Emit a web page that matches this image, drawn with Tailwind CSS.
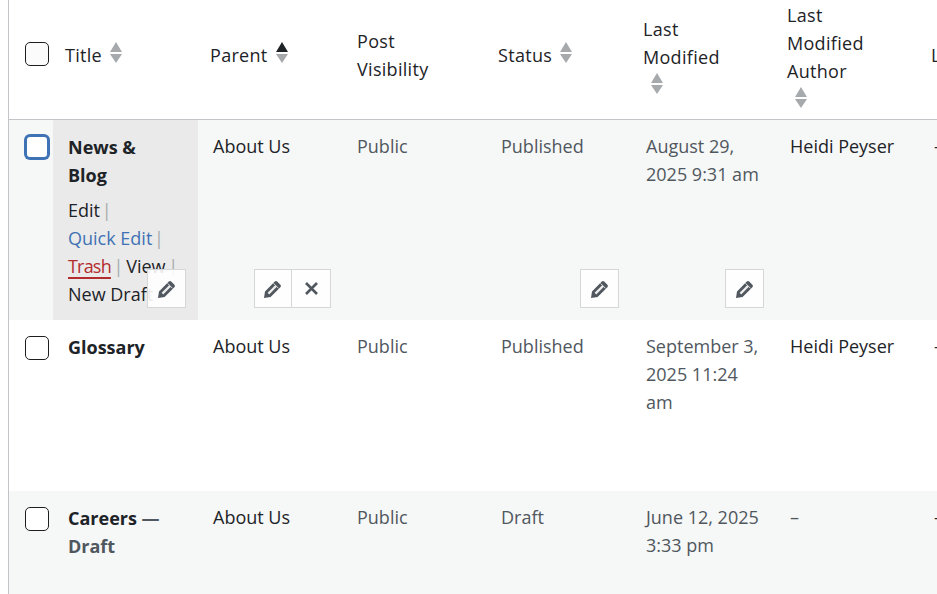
<!DOCTYPE html>
<html lang="en">
  <head>
    <meta charset="UTF-8">
    <script src="https://cdn.jsdelivr.net/npm/@tailwindcss/browser@4"></script>
    <title>Pages</title>
  </head>
  <body class="h-screen overflow-hidden bg-white font-['Open_Sans',sans-serif] text-[18px] leading-[28px] text-[#1d2327]">
    <svg class="hidden">
      <symbol id="pencil" viewBox="0 0 18 18">
        <path fill="#50575e" d="M0 18 L1 11.4 L10.8 1.6 Q12 .4 13.2 1.6 L16.4 4.8 Q17.6 6 16.4 7.2 L6.6 17 Z"/>
        <path stroke="#eeeeee" stroke-width="2.2" fill="none" d="M4.4 13.6 L12 6"/>
        <path stroke="#eeeeee" stroke-width="0.9" fill="none" d="M9.6 3.4 L14.6 8.4"/>
      </symbol>
      <symbol id="sort" viewBox="0 0 12 21">
        <path fill="#a7aaad" d="M6 0 L12 10 H0 Z M0 12 H12 L6 21 Z"/>
      </symbol>
      <symbol id="sort-up" viewBox="0 0 12 21">
        <path fill="#1d2327" d="M6 0 L12 10 H0 Z"/>
        <path fill="#a7aaad" d="M0 12 H12 L6 21 Z"/>
      </symbol>
    </svg>
    <div class="ml-[8px] w-[1100px] border-l border-[#c3c4c7]">
      <table class="table-fixed w-[1055px] border-separate border-spacing-0">
        <colgroup>
          <col class="w-[44px]">
          <col class="w-[145px]">
          <col class="w-[144px]">
          <col class="w-[144px]">
          <col class="w-[145px]">
          <col class="w-[144px]">
          <col class="w-[144px]">
          <col class="w-[145px]">
        </colgroup>
        <thead>
          <tr class="h-[120px] text-left tracking-[0.3px]">
            <th class="border-b border-[#c3c4c7] pl-[16px] pb-[12px] font-normal"><input type="checkbox" class="block w-6 h-6 appearance-none rounded-[5px] border-[1.5px] border-[#1e1e1e] bg-[#fbfbfb]"></th>
            <th class="border-b border-[#c3c4c7] px-3 pb-[10px] font-normal"><span class="inline-flex items-center gap-2">Title <svg class="mb-[5px] w-3 h-[21px]"><use href="#sort"/></svg></span></th>
            <th class="border-b border-[#c3c4c7] px-3 pb-[10px] font-normal"><span class="inline-flex items-center gap-2">Parent <svg class="mb-[5px] w-3 h-[21px]"><use href="#sort-up"/></svg></span></th>
            <th class="border-b border-[#c3c4c7] pl-[15px] pr-3 pb-[10px] font-normal">Post<br>Visibility</th>
            <th class="border-b border-[#c3c4c7] px-3 pb-[10px] font-normal"><span class="inline-flex items-center gap-2">Status <svg class="mb-[5px] w-3 h-[21px]"><use href="#sort"/></svg></span></th>
            <th class="border-b border-[#c3c4c7] px-3 pb-[10px] font-normal">Last<br>Modified<svg class="ml-2 mt-[2px] w-3 h-[21px]"><use href="#sort"/></svg></th>
            <th class="border-b border-[#c3c4c7] px-3 pb-[10px] font-normal">Last<br>Modified<br>Author<svg class="ml-2 mt-[2px] w-3 h-[21px]"><use href="#sort"/></svg></th>
            <th class="border-b border-[#c3c4c7] px-3 pb-[10px] font-normal">Last Editor</th>
          </tr>
        </thead>
        <tbody>
          <tr class="h-[200px] bg-[#f6f7f7] align-top">
            <td class="pl-[16px] pt-[15px]"><input type="checkbox" class="block w-6 h-6 appearance-none rounded-[5px] border-2 border-[#3f73b6] bg-white ring-1 ring-[#3f73b6]"></td>
            <td class="relative bg-[#eaeaea] px-[15px] pt-[13px]">
              <a class="font-bold">News &amp;<br>Blog</a>
              <div class="pt-[7px] whitespace-nowrap">
                <a>Edit</a> <span class="-ml-[3px] text-[#a7aaad]">|</span><br>
                <a class="text-[#4072b4]">Quick Edit</a> <span class="-ml-[3px] text-[#a7aaad]">|</span><br>
                <a class="text-[#b32d2e] tracking-[-0.8px] underline decoration-2 underline-offset-[4px]">Trash</a> <span class="-ml-[2px] text-[#a7aaad]">|</span>
                <a class="-ml-[2px]">View</a> <span class="-ml-[2px] text-[#a7aaad]">|</span><br>
                <a>New Draft</a>
              </div>
              <button class="absolute right-[12px] bottom-[12px] flex h-[39px] w-[39px] items-center justify-center border border-[#d5d6d7] bg-white/90"><svg class="w-[18px] h-[18px]"><use href="#pencil"/></svg></button>
            </td>
            <td class="relative px-[15px] pt-[12px]">
              About Us
              <div class="absolute right-[11px] bottom-[12px] flex h-[39px] border border-[#d5d6d7] bg-white/90">
                <button class="flex w-[37px] items-center justify-center border-r border-[#d5d6d7]"><svg class="w-[18px] h-[18px]"><use href="#pencil"/></svg></button>
                <button class="flex w-[38px] items-center justify-center"><svg class="w-[13px] h-[13px]" viewBox="0 0 13 13"><path stroke="#50575e" stroke-width="2.6" d="M1 1 L12 12 M12 1 L1 12"/></svg></button>
              </div>
            </td>
            <td class="px-[15px] pt-[12px] text-[#50575e]">Public</td>
            <td class="relative px-[15px] pt-[12px] text-[#50575e]">
              Published
              <button class="absolute right-[12px] bottom-[12px] flex h-[39px] w-[39px] items-center justify-center border border-[#d5d6d7] bg-white/90"><svg class="w-[18px] h-[18px]"><use href="#pencil"/></svg></button>
            </td>
            <td class="relative px-[15px] pt-[12px] text-[#50575e]">
              August 29, 2025 9:31 am
              <button class="absolute right-[11px] bottom-[12px] flex h-[39px] w-[39px] items-center justify-center border border-[#d5d6d7] bg-white/90"><svg class="w-[18px] h-[18px]"><use href="#pencil"/></svg></button>
            </td>
            <td class="px-[15px] pt-[12px]">Heidi Peyser</td>
            <td class="px-[15px] pt-[12px]">—</td>
          </tr>
          <tr class="h-[171px] bg-white align-top">
            <td class="pl-[16px] pt-[16px]"><input type="checkbox" class="block w-6 h-6 appearance-none rounded-[5px] border-[1.5px] border-[#1e1e1e] bg-white"></td>
            <td class="px-[15px] pt-[13px]"><a class="font-bold">Glossary</a></td>
            <td class="px-[15px] pt-[12px]">About Us</td>
            <td class="px-[15px] pt-[12px] text-[#50575e]">Public</td>
            <td class="px-[15px] pt-[12px] text-[#50575e]">Published</td>
            <td class="px-[15px] pt-[12px] text-[#50575e]">September 3, 2025 11:24 am</td>
            <td class="px-[15px] pt-[12px]">Heidi Peyser</td>
            <td class="px-[15px] pt-[12px]">—</td>
          </tr>
          <tr class="h-[171px] bg-[#f6f7f7] align-top">
            <td class="pl-[16px] pt-[16px]"><input type="checkbox" class="block w-6 h-6 appearance-none rounded-[5px] border-[1.5px] border-[#1e1e1e] bg-white"></td>
            <td class="px-[15px] pt-[13px] font-bold"><a>Careers</a> <span class="text-[#50575e]">— Draft</span></td>
            <td class="px-[15px] pt-[12px]">About Us</td>
            <td class="px-[15px] pt-[12px] text-[#50575e]">Public</td>
            <td class="px-[15px] pt-[12px] text-[#50575e]">Draft</td>
            <td class="px-[15px] pt-[12px] text-[#50575e]">June 12, 2025 3:33 pm</td>
            <td class="px-[15px] pt-[12px] text-[#50575e]">–</td>
            <td class="px-[15px] pt-[12px]">—</td>
          </tr>
        </tbody>
      </table>
    </div>
  </body>
</html>
